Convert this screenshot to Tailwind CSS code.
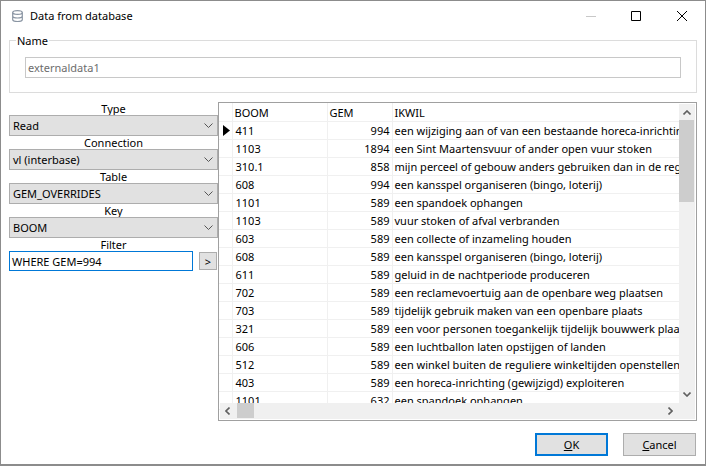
<!DOCTYPE html>
<html lang="en">
<head>
  <meta charset="UTF-8">
  <title>Data from database</title>
  <script src="https://cdn.jsdelivr.net/npm/@tailwindcss/browser@4"></script>
</head>
<body class="bg-white">
  <div class="w-[706px] h-[466px] flex flex-col bg-white border border-b-2 border-[#8c8c8c] overflow-hidden text-[11px] leading-[13px] text-black font-['Noto_Sans',sans-serif]">
    <!-- Title bar -->
    <div class="h-[33px] pb-[4px] flex items-center shrink-0">
      <svg class="ml-[11px] w-[11px] h-[12px]" viewBox="0 0 11 12" fill="none" stroke="#8a95a3" stroke-width="1.200">
        <ellipse cx="5.500" cy="2.500" rx="4.800" ry="1.900"/>
        <path d="M.7 2.500v7c0 1.100 2.100 2 4.800 2s4.800-.9 4.800-2v-7M.7 6c0 1.100 2.100 2 4.800 2s4.800-.9 4.800-2"/>
      </svg>
      <span class="ml-[7px]">Data from database</span>
      <div class="ml-auto flex items-center">
        <svg class="w-[10px] h-[10px] mr-[35px]" viewBox="0 0 10 10" stroke="#c8c8c8"><path d="M0 5.500h10"/></svg>
        <svg class="w-[10px] h-[10px] mr-[36px]" viewBox="0 0 10 10" fill="none" stroke="#000"><path d="M.5.500h9v9h-9z"/></svg>
        <svg class="w-[10px] h-[10px] mr-[18px]" viewBox="0 0 10 10" stroke="#000"><path d="M0 0l10 10M10 0L0 10"/></svg>
      </div>
    </div>
    <!-- Name group -->
    <fieldset class="mx-[8px] h-[59px] border border-[#dcdcdc] px-[15px] shrink-0">
      <legend class="ml-[-9px] px-[1px]">Name</legend>
      <div class="mt-[10px] h-[21px] border border-[#c8c8c8] px-[2px] flex items-center text-[#6d6d6d]">externaldata1</div>
    </fieldset>
    <div class="flex mt-[9px] ml-[8px] h-[319px] shrink-0">
      <!-- Left column -->
      <div class="w-[209px] flex flex-col">
        <div class="text-center h-[13px]">Type</div>
        <div class="h-[21px] bg-[#e1e1e1] border border-[#adadad] flex items-center justify-between px-[3px]"><span>Read</span><svg class="w-[9px] h-[5px] mr-[1px]" viewBox="0 0 9 5" fill="none" stroke="#555"><path d="M.5.500l4 4 4-4"/></svg></div>
        <div class="text-center h-[13px]">Connection</div>
        <div class="h-[21px] bg-[#e1e1e1] border border-[#adadad] flex items-center justify-between px-[3px]"><span>vl (interbase)</span><svg class="w-[9px] h-[5px] mr-[1px]" viewBox="0 0 9 5" fill="none" stroke="#555"><path d="M.5.500l4 4 4-4"/></svg></div>
        <div class="text-center h-[13px]">Table</div>
        <div class="h-[21px] bg-[#e1e1e1] border border-[#adadad] flex items-center justify-between px-[3px]"><span>GEM_OVERRIDES</span><svg class="w-[9px] h-[5px] mr-[1px]" viewBox="0 0 9 5" fill="none" stroke="#555"><path d="M.5.500l4 4 4-4"/></svg></div>
        <div class="text-center h-[13px]">Key</div>
        <div class="h-[21px] bg-[#e1e1e1] border border-[#adadad] flex items-center justify-between px-[3px]"><span>BOOM</span><svg class="w-[9px] h-[5px] mr-[1px]" viewBox="0 0 9 5" fill="none" stroke="#555"><path d="M.5.500l4 4 4-4"/></svg></div>
        <div class="text-center h-[13px]">Filter</div>
        <div class="flex items-center">
          <div class="w-[184px] h-[20px] border border-[#0078d7] flex items-center px-[2px]">WHERE GEM=994</div>
          <div class="ml-[6px] w-[18px] h-[18px] bg-[#e1e1e1] border border-[#adadad] flex items-center justify-center">&gt;</div>
        </div>
      </div>
      <!-- Grid -->
      <div class="relative w-[479px] h-[319px] border border-[#a0a0a0] overflow-hidden">
        <table class="table-fixed border-collapse w-[460px]">
          <colgroup><col class="w-[13px]"><col class="w-[95px]"><col class="w-[65px]"><col></colgroup>
          <thead>
            <tr class="h-[18px] text-left">
              <th class="border-r border-b border-[#f0f0f0]"></th>
              <th class="font-normal px-[2px] pt-[2px] border-r border-b border-[#f0f0f0]">BOOM</th>
              <th class="font-normal px-[2px] pt-[2px] border-r border-b border-[#f0f0f0]">GEM</th>
              <th class="font-normal px-[2px] pt-[2px] border-b border-[#f0f0f0]">IKWIL</th>
            </tr>
          </thead>
          <tbody>
            <tr class="h-[18px]"><td class="border-r border-b border-[#f0f0f0] p-0"><svg class="ml-[4px] w-[7px] h-[11px]" viewBox="0 0 7 11"><path d="M0 0l7 5.500L0 11z"/></svg></td><td class="px-[3px] border-r border-b border-[#f0f0f0]">411</td><td class="px-[2px] text-right border-r border-b border-[#f0f0f0]">994</td><td class="px-[2px] border-b border-[#f0f0f0] whitespace-nowrap overflow-hidden">een wijziging aan of van een bestaande horeca-inrichting</td></tr>
            <tr class="h-[18px]"><td class="border-r border-b border-[#f0f0f0]"></td><td class="px-[3px] border-r border-b border-[#f0f0f0]">1103</td><td class="px-[2px] text-right border-r border-b border-[#f0f0f0]">1894</td><td class="px-[2px] border-b border-[#f0f0f0] whitespace-nowrap overflow-hidden">een Sint Maartensvuur of ander open vuur stoken</td></tr>
            <tr class="h-[18px]"><td class="border-r border-b border-[#f0f0f0]"></td><td class="px-[3px] border-r border-b border-[#f0f0f0]">310.1</td><td class="px-[2px] text-right border-r border-b border-[#f0f0f0]">858</td><td class="px-[2px] border-b border-[#f0f0f0] whitespace-nowrap overflow-hidden">mijn perceel of gebouw anders gebruiken dan in de regels</td></tr>
            <tr class="h-[18px]"><td class="border-r border-b border-[#f0f0f0]"></td><td class="px-[3px] border-r border-b border-[#f0f0f0]">608</td><td class="px-[2px] text-right border-r border-b border-[#f0f0f0]">994</td><td class="px-[2px] border-b border-[#f0f0f0] whitespace-nowrap overflow-hidden">een kansspel organiseren (bingo, loterij)</td></tr>
            <tr class="h-[18px]"><td class="border-r border-b border-[#f0f0f0]"></td><td class="px-[3px] border-r border-b border-[#f0f0f0]">1101</td><td class="px-[2px] text-right border-r border-b border-[#f0f0f0]">589</td><td class="px-[2px] border-b border-[#f0f0f0] whitespace-nowrap overflow-hidden">een spandoek ophangen</td></tr>
            <tr class="h-[18px]"><td class="border-r border-b border-[#f0f0f0]"></td><td class="px-[3px] border-r border-b border-[#f0f0f0]">1103</td><td class="px-[2px] text-right border-r border-b border-[#f0f0f0]">589</td><td class="px-[2px] border-b border-[#f0f0f0] whitespace-nowrap overflow-hidden">vuur stoken of afval verbranden</td></tr>
            <tr class="h-[18px]"><td class="border-r border-b border-[#f0f0f0]"></td><td class="px-[3px] border-r border-b border-[#f0f0f0]">603</td><td class="px-[2px] text-right border-r border-b border-[#f0f0f0]">589</td><td class="px-[2px] border-b border-[#f0f0f0] whitespace-nowrap overflow-hidden">een collecte of inzameling houden</td></tr>
            <tr class="h-[18px]"><td class="border-r border-b border-[#f0f0f0]"></td><td class="px-[3px] border-r border-b border-[#f0f0f0]">608</td><td class="px-[2px] text-right border-r border-b border-[#f0f0f0]">589</td><td class="px-[2px] border-b border-[#f0f0f0] whitespace-nowrap overflow-hidden">een kansspel organiseren (bingo, loterij)</td></tr>
            <tr class="h-[18px]"><td class="border-r border-b border-[#f0f0f0]"></td><td class="px-[3px] border-r border-b border-[#f0f0f0]">611</td><td class="px-[2px] text-right border-r border-b border-[#f0f0f0]">589</td><td class="px-[2px] border-b border-[#f0f0f0] whitespace-nowrap overflow-hidden">geluid in de nachtperiode produceren</td></tr>
            <tr class="h-[18px]"><td class="border-r border-b border-[#f0f0f0]"></td><td class="px-[3px] border-r border-b border-[#f0f0f0]">702</td><td class="px-[2px] text-right border-r border-b border-[#f0f0f0]">589</td><td class="px-[2px] border-b border-[#f0f0f0] whitespace-nowrap overflow-hidden">een reclamevoertuig aan de openbare weg plaatsen</td></tr>
            <tr class="h-[18px]"><td class="border-r border-b border-[#f0f0f0]"></td><td class="px-[3px] border-r border-b border-[#f0f0f0]">703</td><td class="px-[2px] text-right border-r border-b border-[#f0f0f0]">589</td><td class="px-[2px] border-b border-[#f0f0f0] whitespace-nowrap overflow-hidden">tijdelijk gebruik maken van een openbare plaats</td></tr>
            <tr class="h-[18px]"><td class="border-r border-b border-[#f0f0f0]"></td><td class="px-[3px] border-r border-b border-[#f0f0f0]">321</td><td class="px-[2px] text-right border-r border-b border-[#f0f0f0]">589</td><td class="px-[2px] border-b border-[#f0f0f0] whitespace-nowrap overflow-hidden">een voor personen toegankelijk tijdelijk bouwwerk plaatsen</td></tr>
            <tr class="h-[18px]"><td class="border-r border-b border-[#f0f0f0]"></td><td class="px-[3px] border-r border-b border-[#f0f0f0]">606</td><td class="px-[2px] text-right border-r border-b border-[#f0f0f0]">589</td><td class="px-[2px] border-b border-[#f0f0f0] whitespace-nowrap overflow-hidden">een luchtballon laten opstijgen of landen</td></tr>
            <tr class="h-[18px]"><td class="border-r border-b border-[#f0f0f0]"></td><td class="px-[3px] border-r border-b border-[#f0f0f0]">512</td><td class="px-[2px] text-right border-r border-b border-[#f0f0f0]">589</td><td class="px-[2px] border-b border-[#f0f0f0] whitespace-nowrap overflow-hidden">een winkel buiten de reguliere winkeltijden openstellen</td></tr>
            <tr class="h-[18px]"><td class="border-r border-b border-[#f0f0f0]"></td><td class="px-[3px] border-r border-b border-[#f0f0f0]">403</td><td class="px-[2px] text-right border-r border-b border-[#f0f0f0]">589</td><td class="px-[2px] border-b border-[#f0f0f0] whitespace-nowrap overflow-hidden">een horeca-inrichting (gewijzigd) exploiteren</td></tr>
            <tr class="h-[18px]"><td class="border-r border-b border-[#f0f0f0]"></td><td class="px-[3px] border-r border-b border-[#f0f0f0]">1101</td><td class="px-[2px] text-right border-r border-b border-[#f0f0f0]">632</td><td class="px-[2px] border-b border-[#f0f0f0] whitespace-nowrap overflow-hidden">een spandoek ophangen</td></tr>
          </tbody>
        </table>
        <!-- Vertical scrollbar -->
        <div class="absolute right-[1px] top-[1px] bottom-[17px] w-[16px] bg-[#f0f0f0] flex flex-col items-start">
          <svg class="ml-[4px] mt-[6px] w-[8px] h-[5px]" viewBox="0 0 8 5" fill="none" stroke="#606060" stroke-width="1.600"><path d="M.5 4.500L4 1l3.500 3.500"/></svg>
          <div class="mt-[5px] w-[15px] h-[82px] bg-[#cdcdcd]"></div>
          <svg class="ml-[4px] mt-auto mb-[6px] w-[8px] h-[5px]" viewBox="0 0 8 5" fill="none" stroke="#606060" stroke-width="1.600"><path d="M.5.500L4 4l3.500-3.500"/></svg>
        </div>
        <!-- Horizontal scrollbar -->
        <div class="absolute left-[1px] right-[1px] bottom-[1px] h-[16px] bg-[#f0f0f0] flex items-start">
          <svg class="ml-[5px] mt-[4px] w-[5px] h-[8px]" viewBox="0 0 5 8" fill="none" stroke="#606060" stroke-width="1.600"><path d="M4.500.500L1 4l3.500 3.500"/></svg>
          <div class="ml-[7px] w-[17px] h-[15px] bg-[#cdcdcd]"></div>
          <svg class="ml-auto mr-[22px] mt-[4px] w-[5px] h-[8px]" viewBox="0 0 5 8" fill="none" stroke="#606060" stroke-width="1.600"><path d="M.5.500L4 4 .5 7.500"/></svg>
        </div>
      </div>
    </div>
    <!-- Buttons -->
    <div class="flex justify-end items-start mt-[12px] pr-[9px]">
      <button class="w-[73px] h-[23px] bg-[#e1e1e1] border-2 border-[#0078d7]"><span class="underline">O</span>K</button>
      <button class="ml-[15px] w-[73px] h-[23px] bg-[#e1e1e1] border border-[#adadad]"><span class="underline">C</span>ancel</button>
    </div>
  </div>
</body>
</html>
